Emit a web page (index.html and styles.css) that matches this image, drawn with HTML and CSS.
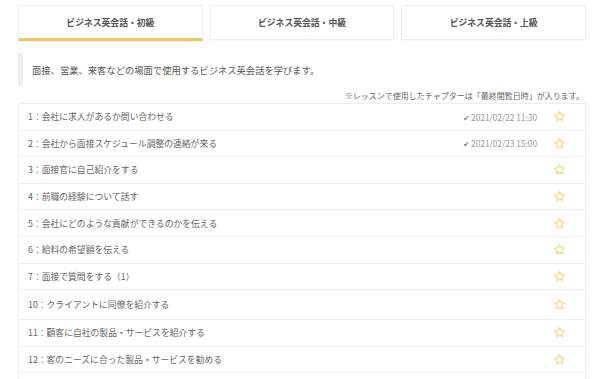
FILE: index.html
```html
<!DOCTYPE html>
<html lang="ja">
<head>
<meta charset="utf-8">
<link rel="stylesheet" href="styles.css">
</head>
<body>
<div class="page">
  <div class="tabs">
    <div class="tab active">ビジネス英会話・初級</div>
    <div class="tab">ビジネス英会話・中級</div>
    <div class="tab">ビジネス英会話・上級</div>
  </div>
  <div class="desc">面接、営業、来客などの場面で使用するビジネス英会話を学びます。</div>
  <div class="note">※レッスンで使用したチャプターは「最終閲覧日時」が入ります。</div>
  <ul class="list">
    <li class="row"><span class="title">1：会社に求人があるか問い合わせる</span><span class="date"><span class="check">✔</span>2021/02/22 11:30</span><span class="star"><svg viewBox="0 0 24 24"><path d="M12 2.8l2.7 5.9 6.4.7-4.8 4.3 1.3 6.3L12 16.8l-5.6 3.2 1.3-6.3-4.8-4.3 6.4-.7z"/></svg></span></li>
    <li class="row"><span class="title">2：会社から面接スケジュール調整の連絡が来る</span><span class="date"><span class="check">✔</span>2021/02/23 15:00</span><span class="star"><svg viewBox="0 0 24 24"><path d="M12 2.8l2.7 5.9 6.4.7-4.8 4.3 1.3 6.3L12 16.8l-5.6 3.2 1.3-6.3-4.8-4.3 6.4-.7z"/></svg></span></li>
    <li class="row"><span class="title">3：面接官に自己紹介をする</span><span class="star"><svg viewBox="0 0 24 24"><path d="M12 2.8l2.7 5.9 6.4.7-4.8 4.3 1.3 6.3L12 16.8l-5.6 3.2 1.3-6.3-4.8-4.3 6.4-.7z"/></svg></span></li>
    <li class="row"><span class="title">4：前職の経験について話す</span><span class="star"><svg viewBox="0 0 24 24"><path d="M12 2.8l2.7 5.9 6.4.7-4.8 4.3 1.3 6.3L12 16.8l-5.6 3.2 1.3-6.3-4.8-4.3 6.4-.7z"/></svg></span></li>
    <li class="row"><span class="title">5：会社にどのような貢献ができるのかを伝える</span><span class="star"><svg viewBox="0 0 24 24"><path d="M12 2.8l2.7 5.9 6.4.7-4.8 4.3 1.3 6.3L12 16.8l-5.6 3.2 1.3-6.3-4.8-4.3 6.4-.7z"/></svg></span></li>
    <li class="row"><span class="title">6：給料の希望額を伝える</span><span class="star"><svg viewBox="0 0 24 24"><path d="M12 2.8l2.7 5.9 6.4.7-4.8 4.3 1.3 6.3L12 16.8l-5.6 3.2 1.3-6.3-4.8-4.3 6.4-.7z"/></svg></span></li>
    <li class="row"><span class="title">7：面接で質問をする（1）</span><span class="star"><svg viewBox="0 0 24 24"><path d="M12 2.8l2.7 5.9 6.4.7-4.8 4.3 1.3 6.3L12 16.8l-5.6 3.2 1.3-6.3-4.8-4.3 6.4-.7z"/></svg></span></li>
    <li class="row tall"><span class="title">10：クライアントに同僚を紹介する</span><span class="star"><svg viewBox="0 0 24 24"><path d="M12 2.8l2.7 5.9 6.4.7-4.8 4.3 1.3 6.3L12 16.8l-5.6 3.2 1.3-6.3-4.8-4.3 6.4-.7z"/></svg></span></li>
    <li class="row"><span class="title">11：顧客に自社の製品・サービスを紹介する</span><span class="star"><svg viewBox="0 0 24 24"><path d="M12 2.8l2.7 5.9 6.4.7-4.8 4.3 1.3 6.3L12 16.8l-5.6 3.2 1.3-6.3-4.8-4.3 6.4-.7z"/></svg></span></li>
    <li class="row"><span class="title">12：客のニーズに合った製品・サービスを勧める</span><span class="star"><svg viewBox="0 0 24 24"><path d="M12 2.8l2.7 5.9 6.4.7-4.8 4.3 1.3 6.3L12 16.8l-5.6 3.2 1.3-6.3-4.8-4.3 6.4-.7z"/></svg></span></li>
    <li class="row empty"></li>
  </ul>
</div>
</body>
</html>
```

FILE: styles.css
```css
html, body {
  margin: 0;
  padding: 0;
  background: #fff;
  overflow: hidden;
}
body {
  font-family: "Noto Sans CJK JP", "Noto Sans", sans-serif;
  color: #666;
}
.page {
  padding: 5px 14px 0 18px;
}
.tabs {
  display: flex;
  gap: 7px;
}
.tab {
  flex: 1;
  height: 35px;
  box-sizing: border-box;
  border: 1px solid #eee;
  box-shadow: 0 1px 2px rgba(0, 0, 0, 0.04);
  display: flex;
  align-items: center;
  justify-content: center;
  font-size: 8.8px;
  font-weight: bold;
  color: #555;
  background: #fff;
}
.tab.active {
  border-bottom: 3px solid #f0c462;
  height: 36px;
}
.desc {
  margin-top: 12px;
  height: 33px;
  border-left: 5px solid #eee;
  padding-left: 9px;
  display: flex;
  align-items: center;
  font-size: 9.3px;
  color: #555;
}
.note {
  margin-top: 4px;
  text-align: right;
  font-size: 8px;
  line-height: 12px;
  color: #666;
  padding-right: 2px;
}
.list {
  list-style: none;
  margin: 1px 0 0;
  padding: 0;
  border: 1px solid #eee;
  border-bottom: none;
}
.row {
  height: 26.6px;
  box-sizing: border-box;
  border-bottom: 1px solid #eee;
  display: flex;
  align-items: center;
  padding-left: 9px;
  font-size: 8.8px;
}
.row.tall {
  height: 30px;
}
.title {
  flex: 1;
  color: #666;
}
.date {
  font-size: 8.3px;
  color: #999;
  margin-right: 16px;
}
.check {
  font-size: 8px;
  color: #888;
  margin-right: 1px;
}
.star {
  width: 13px;
  height: 13px;
  margin-right: 19px;
  display: flex;
}
.star svg {
  width: 13px;
  height: 13px;
  fill: none;
  stroke: #f0cd5c;
  stroke-width: 1.8;
  stroke-linejoin: round;
}
```
